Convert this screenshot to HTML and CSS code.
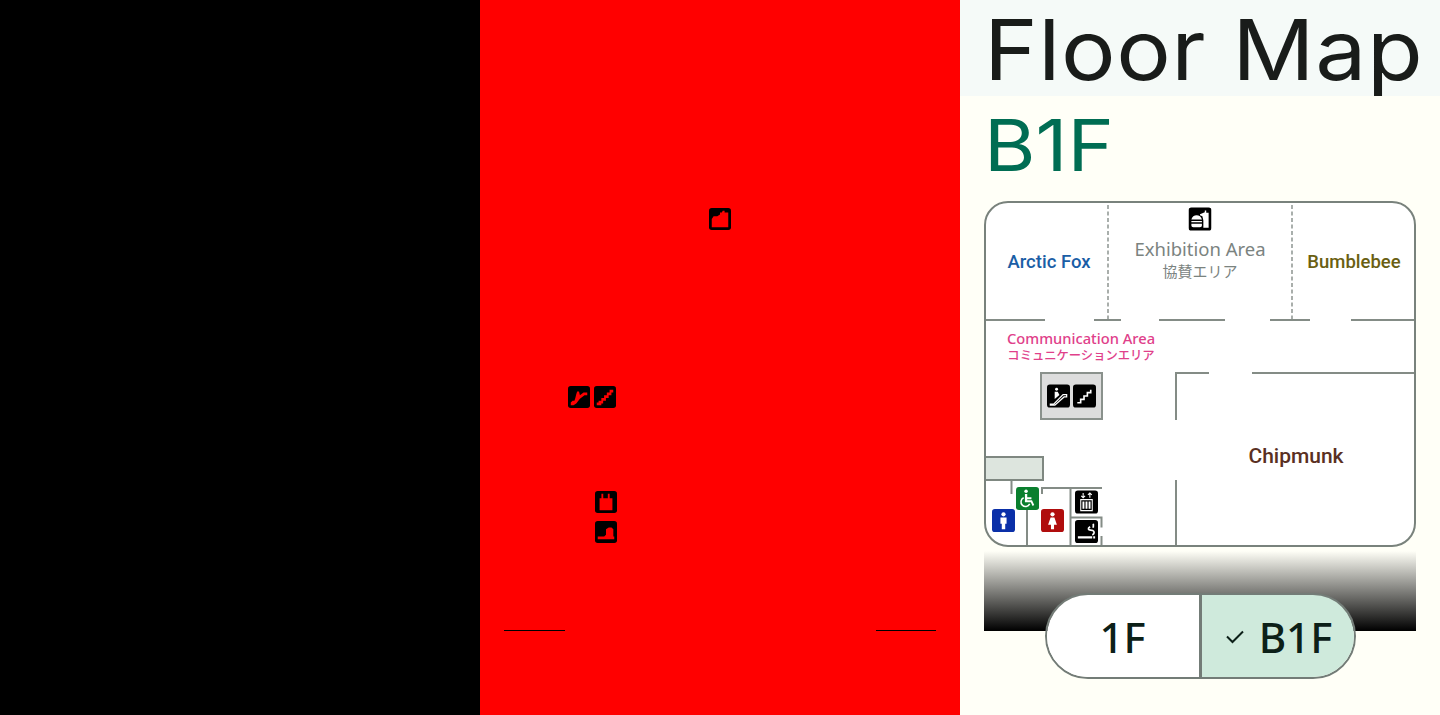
FILE: index.html
```html
<!DOCTYPE html>
<html lang="en">
<head>
  <meta charset="UTF-8" />
  <meta name="viewport" content="width=device-width, initial-scale=1.0"/>
  <title>Floor Map</title>
  <link rel="stylesheet" href="styles.css">
</head>
<body>
  <svg class="defs" width="0" height="0" aria-hidden="true">
    <defs>
      <symbol id="i-food" viewBox="0 0 24 24">
        <rect width="24" height="24" rx="3" fill="#000"/>
        <path fill="#fff" d="M3 12.500C3.600 9.400 6 8 8.500 8s4.900 1.400 5.500 4.500zM3 14h11v1.500H3zM3 17h11v1.500c0 1.200-.8 2-2 2H5c-1.200 0-2-.8-2-2z"/>
        <path fill="#fff" d="M12 7l5-2V3h1.500v2.500H21V21h-5.500v-7.500L14.500 9 12 8z"/>
      </symbol>
      <symbol id="i-esc" viewBox="0 0 24 24">
        <rect width="24" height="24" rx="3" fill="#000"/>
        <circle cx="10" cy="5" r="1.500" fill="#fff"/>
        <path fill="#fff" d="M8 7.500h3.200l1.800 3.500-5 4z"/>
        <path fill="none" stroke="#fff" stroke-width="1.300" d="M3.500 20.500h3.500L16.800 10.500h3.700v2.500h-2.700L8.200 21.500H3.500z"/>
      </symbol>
      <symbol id="i-stairs" viewBox="0 0 24 24">
        <rect width="24" height="24" rx="3" fill="#000"/>
        <path fill="none" stroke="#fff" stroke-width="1.700" d="M4.500 19h3.500v-3.500h3.500V12H15V8.500h3.500V5.500"/>
      </symbol>
      <symbol id="i-lift" viewBox="0 0 24 24">
        <rect width="24" height="24" rx="3" fill="#000"/>
        <path fill="none" stroke="#fff" stroke-width="1.100" d="M6 9.500h12V21H6zM8.500 2.500v5M6.500 5.500l2 2 2-2M15.500 7.500v-5M13.500 4.500l2-2 2 2"/>
        <path fill="#fff" d="M7.800 11.500h2v7.500h-2zM11 11.500h2v7.500h-2zM14.200 11.500h2v7.500h-2z"/>
      </symbol>
      <symbol id="i-smoke" viewBox="0 0 24 24">
        <rect width="24" height="24" rx="3" fill="#000"/>
        <path fill="#fff" d="M3 17h15v2.200H3zM19 17h2v2.200h-2z"/>
        <path fill="none" stroke="#fff" stroke-width="1.800" d="M18 15.500c2.500-1 2.500-3.500.5-4.500-2-.8-4 .2-4.500-1.500-.3-1.200 1-2 1.800-2.500M19 8c0-1.500.5-2.500 0-4"/>
      </symbol>
      <symbol id="i-chair" viewBox="0 0 24 24">
        <rect width="24" height="24" rx="3" fill="#0a7f2e"/>
        <circle cx="10.500" cy="4.500" r="1.800" fill="#fff"/>
        <path fill="#fff" d="M9.300 7.200h2.400v3.600h4.400v1.900h-4.400v1.200h5l2.300 5-1.700.8-1.800-3.900H9.300z"/>
        <path fill="none" stroke="#fff" stroke-width="1.600" d="M8 11.200a4.800 4.800 0 1 0 6.300 6.500"/>
      </symbol>
      <symbol id="i-man" viewBox="0 0 24 24">
        <rect width="24" height="24" rx="3" fill="#0a2fa8"/>
        <circle cx="12" cy="5.500" r="2.200" fill="#fff"/>
        <path fill="#fff" d="M8.800 8.800h6.400v6.700h-1.400V21h-3.600v-5.500H8.800z"/>
      </symbol>
      <symbol id="i-woman" viewBox="0 0 24 24">
        <rect width="24" height="24" rx="3" fill="#b00d0d"/>
        <circle cx="12" cy="5.500" r="2.200" fill="#fff"/>
        <path fill="#fff" d="M10 8.800h4l2.600 7.700h-3V21h-3.200v-4.500h-3z"/>
      </symbol>

      <symbol id="s-food" viewBox="0 0 24 24">
        <rect width="24" height="24" rx="3" fill="#000"/>
        <path fill="#f00" d="M3 21V12l2-3h4l3-2V5h2l1-2h2v2h4v16z"/>
      </symbol>
      <symbol id="s-esc" viewBox="0 0 24 24">
        <rect width="24" height="24" rx="3" fill="#000"/>
        <path fill="#f00" d="M3 21v-3l2-2h2l1-3 1-4 1-3h2l1 4 4-3h4v3h-3l-5 4-4 5-3 2z"/>
      </symbol>
      <symbol id="s-stairs" viewBox="0 0 24 24">
        <rect width="24" height="24" rx="3" fill="#000"/>
        <path fill="#f00" d="M3 21v-3h2v-2h3v-3h3v-3h3V7h3V4h4v3h-2v3h-3v3h-3v3h-3v3H8v2z"/>
      </symbol>
      <symbol id="s-lift" viewBox="0 0 24 24">
        <rect width="24" height="24" rx="3" fill="#000"/>
        <path fill="#f00" d="M5 21V8h2V3h2v5h5V3h2v5h3v13z"/>
      </symbol>
      <symbol id="s-smoke" viewBox="0 0 24 24">
        <rect width="24" height="24" rx="3" fill="#000"/>
        <path fill="#f00" d="M3 20v-3h7l2-2V9l3-2h3l2 2v8h1v3z"/>
      </symbol>
    </defs>
  </svg>

  <main class="page">
    <div class="panel panel-black"></div>

    <div class="panel panel-red">
      <svg class="mask" viewBox="960 0 480 715">
        <use href="#s-food" x="1189" y="208" width="22" height="22"/>
        <use href="#s-esc" x="1048" y="386" width="22" height="22"/>
        <use href="#s-stairs" x="1074" y="386" width="22" height="22"/>
        <use href="#s-lift" x="1075" y="491" width="22" height="22"/>
        <use href="#s-smoke" x="1075" y="521" width="22" height="22"/>
        <path class="mask-line" d="M984 630.500h61M1356 630.500h60"/>
      </svg>
    </div>

    <section class="panel panel-map">
      <header class="top-bar">
        <h1>Floor Map</h1>
      </header>
      <div class="content">
        <h2>B1F</h2>
        <div class="map">
          <svg viewBox="986 203 428 342">
            <path class="dash" d="M1108 205v115M1292 205v115"/>
            <path class="wall" d="M986 320h59M1094 320h27M1159 320h66M1270 320h40M1351 320h63"/>
            <path class="wall" d="M1176 420v-47h33M1252 373h162M1176 546v-66"/>
            <path class="wall" d="M1011.500 480v14M1027 510v36M1042 494v-6h60M1070.500 488v58M1071 517.500h30.500v10M1101.500 536v10"/>

            <rect class="lift-box" x="1041" y="373" width="61" height="46"/>
            <rect class="slab" x="985" y="457" width="58" height="23"/>

            <use href="#i-food" x="1188.500" y="207" width="23" height="24"/>
            <use href="#i-esc" x="1047" y="384" width="23" height="24"/>
            <use href="#i-stairs" x="1073" y="384" width="23" height="24"/>
            <use href="#i-chair" x="1016" y="487" width="23" height="23"/>
            <use href="#i-man" x="992" y="509" width="23" height="23"/>
            <use href="#i-woman" x="1041" y="509" width="23" height="23"/>
            <use href="#i-lift" x="1075" y="490" width="23" height="24"/>
            <use href="#i-smoke" x="1075" y="520" width="23" height="23"/>

            <text class="room arctic" x="1049" y="268">Arctic Fox</text>
            <text class="room exhibit" x="1200" y="256">Exhibition Area</text>
            <text class="room exhibit-ja" x="1200" y="277">協賛エリア</text>
            <text class="room bumble" x="1354" y="268">Bumblebee</text>
            <text class="room comm" x="1081" y="344">Communication Area</text>
            <text class="room comm-ja" x="1081" y="360">コミュニケーションエリア</text>
            <text class="room chip" x="1296" y="463">Chipmunk</text>
          </svg>
        </div>
        <div class="fade"></div>
        <div class="floor-switch">
          <button class="floor">1F</button>
          <button class="floor selected">
            <svg class="check" viewBox="0 0 24 24"><path d="M4 12.500l5.500 5.500L20 7.500"/></svg>
            B1F
          </button>
        </div>
      </div>
    </section>
  </main>
</body>
</html>
```

FILE: styles.css
```css
* {
  box-sizing: border-box;
}
body {
  margin: 0;
  height: 715px;
  overflow: hidden;
  font-family: "Noto Sans", sans-serif;
}
.defs {
  display: block;
  height: 0;
}
.page {
  display: grid;
  grid-template-columns: repeat(3, 480px);
  height: 715px;
}
.panel-black {
  background: #000;
}
.panel-red {
  background: #f00;
}
.mask {
  display: block;
  width: 480px;
  height: 715px;
}
.mask-line {
  stroke: #000;
  stroke-width: 1;
  fill: none;
}
.panel-map {
  background: #fffff7;
}
.top-bar {
  height: 96px;
  overflow: hidden;
  background: #f5faf8;
  padding-left: 24px;
}
.top-bar h1 {
  margin: 0;
  font-family: Inter, sans-serif;
  font-weight: 400;
  font-size: 84px;
  line-height: 100px;
  letter-spacing: 0.5px;
  color: #191c1a;
  transform: scaleX(1.085);
  transform-origin: left;
}
.content {
  padding: 0 24px;
}
.content h2 {
  margin: 0;
  height: 105px;
  font-family: Inter, sans-serif;
  font-weight: 400;
  font-size: 71px;
  line-height: 98px;
  color: #006d53;
  transform: scaleX(1.108);
  transform-origin: left;
}
.map {
  height: 346px;
  border: 2px solid #79827c;
  border-radius: 24px;
  overflow: hidden;
  background: #fff;
}
.map svg {
  display: block;
  width: 428px;
  height: 342px;
}
.wall {
  fill: none;
  stroke: #848c86;
  stroke-width: 2;
}
.dash {
  fill: none;
  stroke: #8d9490;
  stroke-width: 1.500;
  stroke-dasharray: 4 2.500;
}
.lift-box {
  fill: #dddddd;
  stroke: #8a918c;
  stroke-width: 2;
}
.slab {
  fill: #dde5de;
  stroke: #7f8881;
  stroke-width: 2;
}
.room {
  text-anchor: middle;
  font-family: "Noto Sans", "Noto Sans CJK JP", sans-serif;
  font-weight: 500;
}
.arctic {
  font-family: Roboto, sans-serif;
  font-size: 18.500px;
  fill: #1a5ea6;
}
.exhibit {
  font-size: 18.500px;
  font-weight: 400;
  fill: #7b837f;
}
.exhibit-ja {
  font-size: 15px;
  font-weight: 400;
  fill: #7b837f;
}
.bumble {
  font-family: Roboto, sans-serif;
  font-size: 18.500px;
  fill: #6a5f12;
}
.comm {
  font-size: 14.700px;
  fill: #e0408a;
}
.comm-ja {
  font-size: 12.300px;
  fill: #e0408a;
}
.chip {
  font-family: Roboto, sans-serif;
  font-size: 21px;
  fill: #5a3022;
}
.fade {
  height: 80px;
  margin-top: 4px;
  background: linear-gradient(to bottom, #fffff7, #000);
}
.floor-switch {
  display: flex;
  width: 311px;
  height: 86px;
  margin: -38px auto 0;
  border: 2px solid #737c77;
  border-radius: 43px;
  overflow: hidden;
  position: relative;
}
.floor {
  flex: 1;
  display: flex;
  align-items: center;
  justify-content: center;
  gap: 12px;
  padding: 0;
  border: none;
  background: #fff;
  font-family: "Noto Sans", sans-serif;
  font-size: 42px;
  font-weight: 500;
  color: #0c2018;
}
.floor.selected {
  background: #cfeadc;
  border-left: 3px solid #737c77;
}
.check {
  width: 24px;
  height: 24px;
  fill: none;
  stroke: #0c2018;
  stroke-width: 2;
}
```
